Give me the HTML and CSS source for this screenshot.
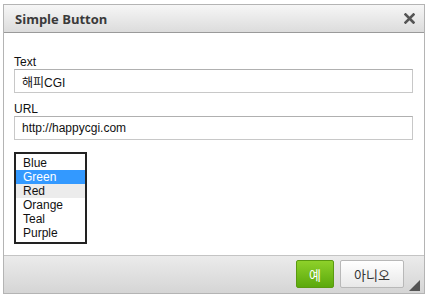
FILE: index.html
```html
<!DOCTYPE html>
<html lang="ko">
<head>
    <meta charset="UTF-8">
    <title>Simple Button</title>
    <link rel="stylesheet" href="styles.css">
</head>
<body>
    <div class="dialog">
        <div class="dialog-title">
            <span>Simple Button</span>
            <svg class="close" width="11" height="11" viewBox="0 0 11 11">
                <path d="M1.5 1.5 L9.5 9.5 M9.5 1.5 L1.5 9.5" stroke="#555" stroke-width="2.6" stroke-linecap="square"/>
            </svg>
        </div>

        <div class="dialog-body">
            <label>Text</label>
            <input type="text" class="field" value="해피CGI">

            <label>URL</label>
            <input type="text" class="field" value="http://happycgi.com">

            <ul class="listbox">
                <li>Blue</li>
                <li class="selected">Green</li>
                <li class="hover">Red</li>
                <li>Orange</li>
                <li>Teal</li>
                <li>Purple</li>
            </ul>
        </div>

        <div class="dialog-footer">
            <button class="btn btn-ok">예</button>
            <button class="btn">아니오</button>
            <span class="grip"></span>
        </div>
    </div>
</body>
</html>
```

FILE: styles.css
```css
body {
    margin: 0;
    background-color: white;
    font-family: "Liberation Sans", Arial, "Noto Sans CJK KR", sans-serif;
    font-size: 12px;
    color: #111;
}

.dialog {
    position: relative;
    width: 420px;
    height: 288px;
    margin: 4px 0 0 3px;
    border: 1px solid #b4b4b4;
    display: flex;
    flex-direction: column;
    background-color: white;
}

.dialog-title {
    height: 27px;
    border-bottom: 1px solid #9a9a9a;
    background: linear-gradient(#f6f6f6, #dcdcdc);
    display: flex;
    align-items: center;
    justify-content: space-between;
    padding: 0 9px 0 11px;
    font-family: "Open Sans", sans-serif;
    font-weight: bold;
    font-size: 13px;
    color: #3a3a3a;
}

.close {
    display: block;
}

.dialog-body {
    flex: 1;
    padding: 23px 10px 0 10px;
}

label {
    display: block;
    line-height: 13px;
    color: #111;
}

.field {
    display: block;
    width: 399px;
    height: 24px;
    margin: 0 0 10px 0;
    padding: 0 7px;
    border: 1px solid #c8c8c8;
    border-top-color: #b0b0b0;
    box-sizing: border-box;
    font-family: "Liberation Sans", Arial, "Noto Sans CJK KR", sans-serif;
    font-size: 12px;
    color: #111;
}

.listbox {
    list-style: none;
    width: 73px;
    margin: 12px 0 0 0;
    padding: 2px 0;
    border: 2px solid #222;
    box-sizing: border-box;
}

.listbox li {
    height: 14px;
    line-height: 14px;
    padding-left: 7px;
}

.listbox .selected {
    background-color: #3399ff;
    color: white;
}

.listbox .hover {
    background-color: #ececec;
}

.dialog-footer {
    height: 38px;
    border-top: 1px solid #c4c4c4;
    background: linear-gradient(#ebebeb, #d5d5d5);
    display: flex;
    align-items: flex-start;
    justify-content: flex-end;
    gap: 6px;
    padding: 4px 20px 0 0;
    box-sizing: border-box;
}

.btn {
    height: 28px;
    width: 64px;
    border: 1px solid #b8b8b8;
    border-radius: 2px;
    background: linear-gradient(#ffffff, #e8e8e8);
    font-family: "Noto Sans CJK KR", sans-serif;
    font-size: 13px;
    color: #333;
    padding: 0;
}

.btn-ok {
    width: 38px;
    border-color: #5a9a10;
    background: linear-gradient(#8ed12a, #5ba90c);
    color: white;
}

.grip {
    position: absolute;
    right: 4px;
    bottom: 2px;
    width: 0;
    height: 0;
    border-left: 11px solid transparent;
    border-bottom: 11px solid #555;
}
```
